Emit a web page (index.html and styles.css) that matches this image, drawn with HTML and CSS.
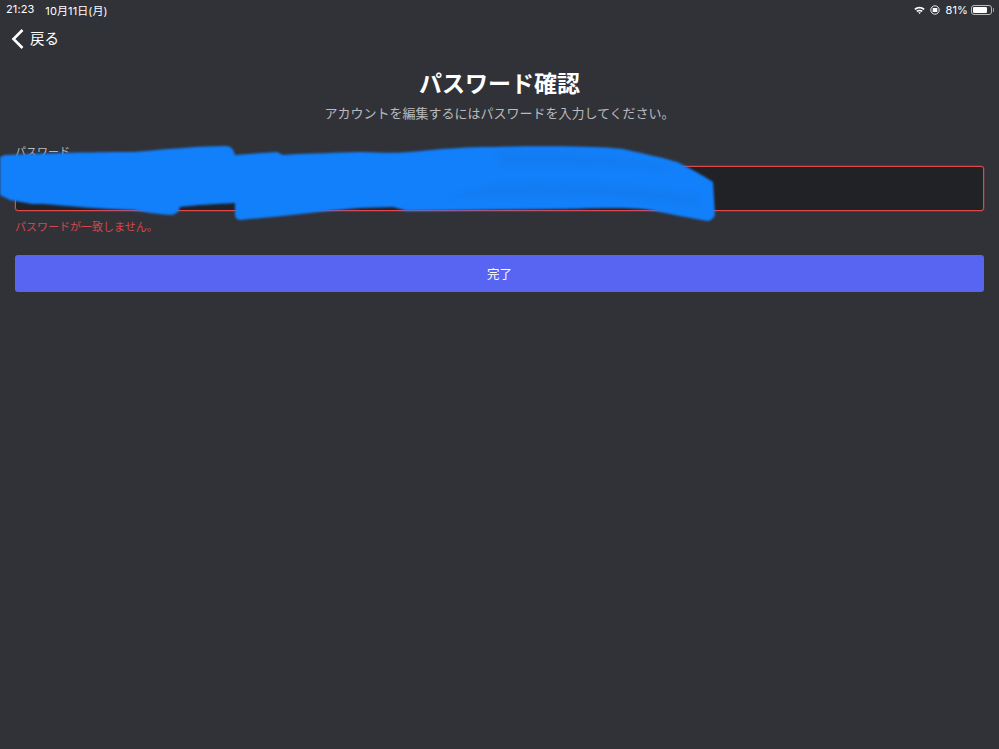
FILE: index.html
```html
<!DOCTYPE html>
<html lang="ja">
<head>
<meta charset="utf-8">
<title>パスワード確認</title>
<link rel="stylesheet" href="styles.css">
</head>
<body>
<div class="page">
  <div class="status">
    <div class="status-left"><span>21:23</span><span>10月11日(月)</span></div>
    <div class="status-right">
      <svg class="wifi" width="11" height="8" viewBox="0 0 11 8"><path d="M0.3 2.8C3.2 0 7.8 0 10.7 2.8L9.6 4C7.2 1.9 3.8 1.9 1.4 4Z" fill="#fff"/><path d="M2.3 4.8C4 3.4 7 3.4 8.7 4.8L7.6 6C6.4 5.1 4.6 5.1 3.4 6Z" fill="#fff"/><path d="M4.2 6.6C4.9 6.1 6.1 6.1 6.8 6.6L5.5 8Z" fill="#fff"/></svg>
      <svg class="lock" width="10" height="10" viewBox="0 0 10 10"><circle cx="5" cy="5" r="4.2" fill="none" stroke="#fff" stroke-width="0.9"/><rect x="2.7" y="3" width="4.6" height="4" fill="#fff"/></svg>
      <span>81%</span>
      <div class="battery"><div class="battery-level"></div></div>
      <div class="battery-tip"></div>
    </div>
  </div>
  <div class="nav">
    <svg class="chevron" width="14" height="22" viewBox="0 0 14 22"><path d="M11.5 2L2.5 11L11.5 20" fill="none" stroke="#fff" stroke-width="2.6"/></svg>
    <span class="nav-label">戻る</span>
  </div>
  <main class="content">
    <h1 class="title">パスワード確認</h1>
    <p class="subtitle">アカウントを編集するにはパスワードを入力してください。</p>
    <label class="label">パスワード</label>
    <div class="input"></div>
    <p class="error">パスワードが一致しません。</p>
    <button class="submit">完了</button>
  </main>
  <svg class="scribble" width="999" height="749" viewBox="0 0 999 749">
    <path class="stroke" d="M0 157L5 155C50 153 100 152 133 152C170 149 200 146 226 146Q233 146 235 155L277 152L283 155C310 153 340 153 360 152C385 153 400 153 410 152C440 149 465 147 493 147C530 146 565 146 593 147C610 148 620 148 627 150C645 154 660 157 677 162C690 168 702 175 713 182L715 215Q712 221 707 221C690 218 670 214 650 210C635 208 620 208 610 208C590 208 575 209 560 209L407 211L393 207L360 208C320 211 280 217 240 220Q235 219 235 215L235 203C215 204 195 205 180 207Q178 215 170 215C155 214 145 212 133 210C100 209 70 206 43 204L32 204L10 200L0 195Z"/>
    <path class="streak" d="M495 151C560 148 620 150 680 170L500 167Z"/>
    <path class="streak" d="M495 182C560 180 640 182 700 195L700 208C640 200 560 196 440 199Z"/>
  </svg>
</div>
</body>
</html>
```

FILE: styles.css
```css
* { box-sizing: border-box; }
html, body { margin: 0; padding: 0; }
body {
  background: #313238;
  color: #fff;
  font-family: "Inter", "Noto Sans CJK JP", sans-serif;
}
.page {
  position: relative;
  width: 999px;
  height: 749px;
  overflow: hidden;
}
.status {
  height: 18px;
  padding: 2px 5px 0 6px;
  display: flex;
  justify-content: space-between;
  align-items: center;
  font-size: 11px;
  letter-spacing: 0.1px;
}
.status-left { display: flex; gap: 11px; }
.status-right { display: flex; align-items: center; }
.wifi { margin-right: 5px; }
.lock { margin-right: 6px; }
.battery {
  width: 21px;
  height: 10px;
  margin-left: 3px;
  padding: 1px;
  border: 1px solid #bbb;
  border-radius: 3px;
}
.battery-level {
  width: 81%;
  height: 100%;
  background: #fff;
  border-radius: 1px;
}
.battery-tip {
  width: 1px;
  height: 4px;
  margin-left: 1px;
  background: #999;
}
.nav {
  height: 41px;
  padding: 0 0 0 11px;
  display: flex;
  align-items: center;
  gap: 5px;
  font-size: 14.5px;
}
.nav-label { padding-bottom: 2px; }
.content {
  padding: 0 15px;
  display: flex;
  flex-direction: column;
}
.title {
  margin: 10px 0 0;
  font-size: 23px;
  line-height: 30px;
  font-weight: 700;
  text-align: center;
}
.subtitle {
  margin: 5px 0 0;
  font-size: 13px;
  line-height: 18px;
  text-align: center;
  color: #b9bbbe;
}
.label {
  margin-top: 22px;
  font-size: 11px;
  line-height: 16px;
  color: #b9bbbe;
}
.input {
  margin-top: 6px;
  height: 45px;
  background: #212226;
  border: 1px solid #e0484c;
  border-radius: 3px;
  box-shadow: 0 0 0 0.5px rgba(224, 72, 76, 0.45);
}
.error {
  margin: 9px 0 0;
  font-size: 11px;
  line-height: 14px;
  color: #d6474b;
}
.submit {
  margin-top: 21px;
  height: 37px;
  border: 0;
  border-radius: 3px;
  background: #5865f2;
  color: #fff;
  font: inherit;
  font-size: 12.5px;
}
.scribble {
  position: absolute;
  top: 0;
  left: 0;
}
.stroke {
  fill: #1280fb;
  filter: blur(0.8px);
}
.streak {
  fill: #1478e6;
  opacity: 0.35;
  filter: blur(2px);
}
```
